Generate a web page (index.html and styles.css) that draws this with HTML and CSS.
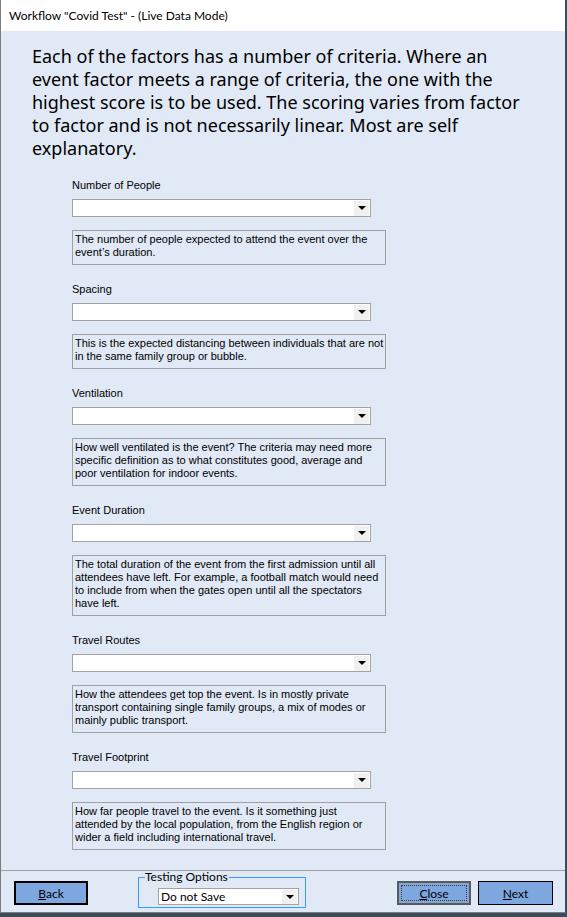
FILE: index.html
```html
<!DOCTYPE html>
<html>
<head>
<meta charset="utf-8">
<title>Workflow</title>
<link rel="stylesheet" href="styles.css">
</head>
<body>
<div class="window">
  <div class="titlebar">Workflow "Covid Test" - (Live Data Mode)</div>
  <div class="content">
    <p class="intro">Each of the factors has a number of criteria. Where an<br>event factor meets a range of criteria, the one with the<br>highest score is to be used. The scoring varies from factor<br>to factor and is not necessarily linear. Most are self<br>explanatory.</p>
    <div class="fields">
      <div class="field">
        <div class="label">Number of People</div>
        <div class="select"><span class="arrow"></span></div>
        <div class="desc">The number of people expected to attend the event over the<br>event’s duration.</div>
      </div>
      <div class="field">
        <div class="label">Spacing</div>
        <div class="select"><span class="arrow"></span></div>
        <div class="desc">This is the expected distancing between individuals that are not<br>in the same family group or bubble.</div>
      </div>
      <div class="field">
        <div class="label">Ventilation</div>
        <div class="select"><span class="arrow"></span></div>
        <div class="desc">How well ventilated is the event? The criteria may need more<br>specific definition as to what constitutes good, average and<br>poor ventilation for indoor events.</div>
      </div>
      <div class="field">
        <div class="label">Event Duration</div>
        <div class="select"><span class="arrow"></span></div>
        <div class="desc">The total duration of the event from the first admission until all<br>attendees have left. For example, a football match would need<br>to include from when the gates open until all the spectators<br>have left.</div>
      </div>
      <div class="field">
        <div class="label">Travel Routes</div>
        <div class="select"><span class="arrow"></span></div>
        <div class="desc">How the attendees get top the event. Is in mostly private<br>transport containing single family groups, a mix of modes or<br>mainly public transport.</div>
      </div>
      <div class="field">
        <div class="label">Travel Footprint</div>
        <div class="select"><span class="arrow"></span></div>
        <div class="desc">How far people travel to the event. Is it something just<br>attended by the local population, from the English region or<br>wider a field including international travel.</div>
      </div>
    </div>
  </div>
  <div class="footer">
    <button class="btn btn-back"><u>B</u>ack</button>
    <fieldset class="options">
      <legend>Testing Options</legend>
      <div class="select small">Do not Save<span class="arrow"></span></div>
    </fieldset>
    <div class="spacer"></div>
    <button class="btn btn-close"><u>C</u>lose</button>
    <button class="btn btn-next"><u>N</u>ext</button>
  </div>
</div>
</body>
</html>
```
FILE: styles.css
```css
html, body {
  margin: 0;
  padding: 0;
}
body {
  width: 567px;
  height: 917px;
  background: #3d4a5c;
  overflow: hidden;
  font-family: "Liberation Sans", Arial, sans-serif;
}
.window {
  width: 564px;
  height: 912px;
  border: 1px solid #7d7d7d;
  border-right-color: #4a4a4a;
  border-top: 0;
  background: #e0e9f5;
  display: flex;
  flex-direction: column;
}
.titlebar {
  height: 31px;
  background: #ffffff;
  font-family: Lato, "Noto Sans", sans-serif;
  font-size: 12px;
  line-height: 31px;
  padding-left: 8px;
  color: #000;
}
.content {
  height: 840px;
  padding-top: 14px;
  box-sizing: border-box;
}
.intro {
  margin: 0 0 19px 31px;
  font-family: "Noto Sans", sans-serif;
  font-size: 18px;
  line-height: 23px;
  color: #000;
  white-space: nowrap;
}
.fields {
  padding-left: 71px;
  display: flex;
  flex-direction: column;
  gap: 18px;
}
.field {
  display: flex;
  flex-direction: column;
  align-items: flex-start;
}
.label {
  font-size: 11px;
  line-height: 13px;
  height: 13px;
  color: #000;
  margin-bottom: 7px;
}
.select {
  width: 296px;
  height: 16px;
  border: 1px solid #a3a3a3;
  background: #fff;
  display: flex;
  justify-content: flex-end;
  align-items: center;
  padding-right: 1px;
}
.arrow {
  width: 15px;
  height: 15px;
  background: #f0f0f0;
  display: flex;
  align-items: center;
  justify-content: center;
}
.arrow::after {
  content: "";
  width: 0;
  height: 0;
  border-left: 4px solid transparent;
  border-right: 4px solid transparent;
  border-top: 4px solid #000;
}
.desc {
  margin-top: 13px;
  width: 308px;
  border: 1px solid #a0a0a0;
  padding: 2px 2px 5px 2px;
  font-size: 11px;
  line-height: 13px;
  color: #000;
  white-space: nowrap;
}
.footer {
  height: 41px;
  border-top: 1px solid #a0a0a0;
  display: flex;
  align-items: flex-start;
  padding-left: 13px;
  padding-right: 12px;
}
.btn {
  width: 74px;
  height: 24px;
  margin-top: 10px;
  background: #7ea7e0;
  font-family: Lato, "Noto Sans", sans-serif;
  font-size: 12px;
  color: #000;
  padding: 0;
  box-sizing: border-box;
  cursor: default;
}
.btn-back {
  border: 2px solid #000;
}
.btn-close {
  border: 2px solid #5a5a5a;
  outline: 1px dotted #4a3a20;
  outline-offset: -5px;
}
.btn-next {
  width: 75px;
  border: 1px solid #000;
  margin-left: 7px;
}
.options {
  margin: 0 0 0 50px;
  padding: 0 6px 2px 6px;
  border: 1px solid #3a9cff;
  width: 166px;
  height: 37px;
  box-sizing: border-box;
}
.options legend {
  padding: 0 1px 0 0;
  font-family: Lato, "Noto Sans", sans-serif;
  font-size: 12px;
  line-height: 12px;
  height: 12px;
  color: #000;
}
.select.small {
  margin-top: 5px;
  margin-left: 13px;
  width: 136px;
  height: 15px;
  justify-content: space-between;
  font-family: Lato, "Noto Sans", sans-serif;
  font-size: 12px;
  padding-left: 2px;
  box-sizing: content-box;
}
.select.small .arrow {
  height: 14px;
}
.spacer {
  flex: 1;
}
```
